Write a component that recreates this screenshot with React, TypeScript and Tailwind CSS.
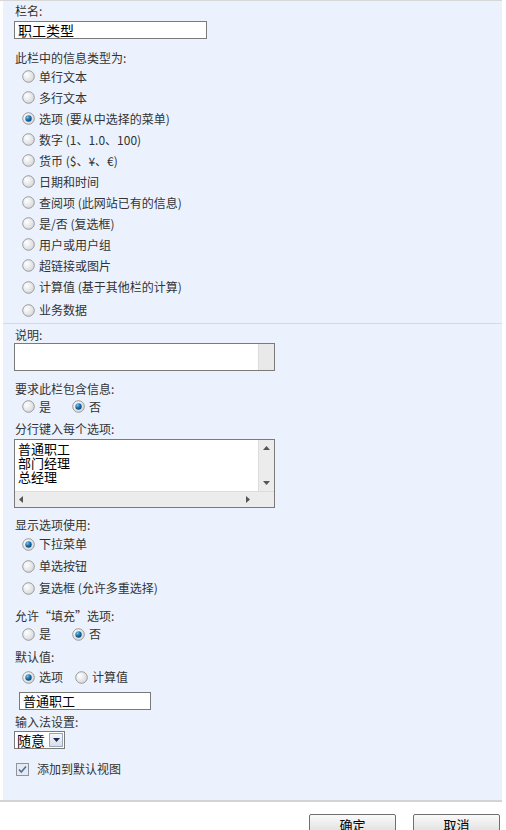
import React from "react";

const font = { fontFamily: '"Noto Sans CJK SC", "Liberation Sans", sans-serif' };

function Radio({ checked }: { checked?: boolean }) {
  return (
    <svg width="13" height="13" viewBox="0 0 13 13" className="shrink-0">
      <defs>
        <radialGradient id="rg" cx="0.35" cy="0.35" r="0.8">
          <stop offset="0" stopColor="#ffffff" />
          <stop offset="1" stopColor="#cfd2d6" />
        </radialGradient>
        <radialGradient id="dot" cx="0.35" cy="0.3" r="0.8">
          <stop offset="0" stopColor="#7cc4f0" />
          <stop offset="0.5" stopColor="#1d6fa8" />
          <stop offset="1" stopColor="#0c3e66" />
        </radialGradient>
      </defs>
      <circle cx="6.5" cy="6.5" r="5.8" fill="url(#rg)" stroke="#9a9a9a" strokeWidth="1" />
      {checked && <circle cx="6.5" cy="6.5" r="3.2" fill="url(#dot)" />}
    </svg>
  );
}

function RadioRow({ label, checked, h }: { label: string; checked?: boolean; h: string }) {
  return (
    <div className={`flex items-center pl-[19px] ${h}`}>
      <Radio checked={checked} />
      <span className="ml-[4px] text-[12px] leading-[14px] text-[#333]">{label}</span>
    </div>
  );
}

function Label({ children, cls = "" }: { children: React.ReactNode; cls?: string }) {
  return <div className={`pl-[12px] text-[12px] leading-[14px] text-[#333] ${cls}`}>{children}</div>;
}

export default function App() {
  const types = [
    "单行文本",
    "多行文本",
    "选项 (要从中选择的菜单)",
    "数字 (1、1.0、100)",
    "货币 ($、¥、€)",
    "日期和时间",
    "查阅项 (此网站已有的信息)",
    "是/否 (复选框)",
    "用户或用户组",
    "超链接或图片",
    "计算值 (基于其他栏的计算)",
  ];
  return (
    <div style={font} className="w-[506px] h-[830px] bg-white overflow-hidden">
      <div className="h-px bg-[#d8d8d8] w-[502px]" />
      <div className="ml-[3px] w-[499px] bg-[#ebf2fd]">
        {/* section 1 */}
        <div className="h-[323px] pt-[3px] border-b border-[#d3dbe6]">
          <Label>栏名:</Label>
          <div className="ml-[11px] mt-[3px] w-[193px] h-[18px] border border-[#7a7a7a] bg-white flex items-center pl-[3px] text-[14px] leading-[16px] text-black">
            职工类型
          </div>
          <Label cls="mt-[12px]">此栏中的信息类型为:</Label>
          <div className="mt-px">
            {types.map((t, i) => (
              <RadioRow key={t} label={t} checked={i === 2} h={i === 10 ? "h-[22px]" : "h-[21px]"} />
            ))}
            <RadioRow label="业务数据" h="h-[22px] pt-[2px]" />
          </div>
        </div>
        {/* section 2 */}
        <div className="h-[476px] pt-[4px]">
          <Label>说明:</Label>
          <div className="ml-[11px] mt-[1px] w-[261px] h-[28px] border border-[#7a7a7a] bg-white flex justify-end">
            <div className="w-[16px] h-full bg-[#e9e9e9] border-l border-[#dcdcdc]" />
          </div>
          <Label cls="mt-[11px]">要求此栏包含信息:</Label>
          <div className="flex h-[21px] items-center">
            <RadioRow label="是" h="h-[21px]" />
            <div className="ml-[2px]">
              <RadioRow label="否" checked h="h-[21px]" />
            </div>
          </div>
          <Label cls="mt-[5px]">分行键入每个选项:</Label>
          <div className="ml-[11px] mt-[3px] w-[261px] h-[69px] border border-[#7a7a7a] bg-white flex flex-col">
            <div className="flex flex-1">
              <div className="flex-1 pl-[3px] pt-[2px] text-[13px] leading-[14px] text-black">
                <div className="h-[14px]">普通职工</div>
                <div className="h-[14px]">部门经理</div>
                <div className="h-[14px]">总经理</div>
              </div>
              <div className="w-[16px] bg-[#ececec] border-l border-[#dcdcdc] flex flex-col items-center justify-between py-[6px]">
                <svg width="7" height="4" viewBox="0 0 7 4"><path d="M0 4 L3.5 0 L7 4 Z" fill="#555" /></svg>
                <svg width="7" height="4" viewBox="0 0 7 4"><path d="M0 0 L3.5 4 L7 0 Z" fill="#555" /></svg>
              </div>
            </div>
            <div className="h-[16px] bg-[#ececec] border-t border-[#dcdcdc] flex items-center justify-between pl-[4px] pr-[24px]">
              <svg width="4" height="7" viewBox="0 0 4 7"><path d="M4 0 L0 3.5 L4 7 Z" fill="#555" /></svg>
              <svg width="4" height="7" viewBox="0 0 4 7"><path d="M0 0 L4 3.5 L0 7 Z" fill="#555" /></svg>
            </div>
          </div>
          <Label cls="mt-[10px]">显示选项使用:</Label>
          <div className="mt-px">
            <RadioRow label="下拉菜单" checked h="h-[22px]" />
            <RadioRow label="单选按钮" h="h-[22px]" />
            <RadioRow label="复选框 (允许多重选择)" h="h-[22px]" />
          </div>
          <Label cls="mt-[10px]">允许“填充”选项:</Label>
          <div className="flex h-[22px] items-center">
            <RadioRow label="是" h="h-[22px]" />
            <div className="ml-[2px]">
              <RadioRow label="否" checked h="h-[22px]" />
            </div>
          </div>
          <Label cls="mt-[5px]">默认值:</Label>
          <div className="flex h-[22px] items-center mt-[2px]">
            <RadioRow label="选项" h="h-[22px]" checked />
            <div className="ml-[-7px]">
              <RadioRow label="计算值" h="h-[22px]" />
            </div>
          </div>
          <div className="ml-[16px] mt-[4px] w-[132px] h-[18px] border border-[#7a7a7a] bg-white flex items-center pl-[3px] text-[13px] leading-[16px] text-black">
            普通职工
          </div>
          <Label cls="mt-[5px]">输入法设置:</Label>
          <div className="ml-[11px] mt-[2px] w-[51px] h-[18px] border border-[#7a7a7a] bg-white flex items-center justify-between pl-[2px] pr-px text-[14px] leading-[16px] text-black">
            <span>随意</span>
            <div className="w-[14px] h-[14px] border border-[#9aa6b8] bg-gradient-to-b from-[#f4f6fa] to-[#d8dee8] flex items-center justify-center">
              <svg width="7" height="4" viewBox="0 0 7 4"><path d="M0 0 L3.5 4 L7 0 Z" fill="#1c2a5a" /></svg>
            </div>
          </div>
          <div className="flex items-center h-[20px] mt-[10px] pl-[13px]">
            <svg width="13" height="13" viewBox="0 0 13 13" className="shrink-0">
              <rect x="0.5" y="0.5" width="12" height="12" fill="#e6eaf0" stroke="#8c94a0" />
              <path d="M3 6.5 L5.3 9 L10 3.5" fill="none" stroke="#4a6fa0" strokeWidth="1.6" />
            </svg>
            <span className="ml-[8px] text-[12px] leading-[14px] text-[#333]">添加到默认视图</span>
          </div>
        </div>
      </div>
      <div className="w-[502px] h-[2px] bg-[#d4d4d4]" />
      <div className="flex justify-end gap-[17px] pr-[6px] mt-[12px]">
        <button className="w-[87px] h-[22px] border border-[#707070] rounded-[2px] bg-gradient-to-b from-[#fafafa] to-[#dcdcdc] text-[13px] leading-[18px] text-black">
          确定
        </button>
        <button className="w-[87px] h-[22px] border border-[#707070] rounded-[2px] bg-gradient-to-b from-[#fafafa] to-[#dcdcdc] text-[13px] leading-[18px] text-black">
          取消
        </button>
      </div>
    </div>
  );
}
